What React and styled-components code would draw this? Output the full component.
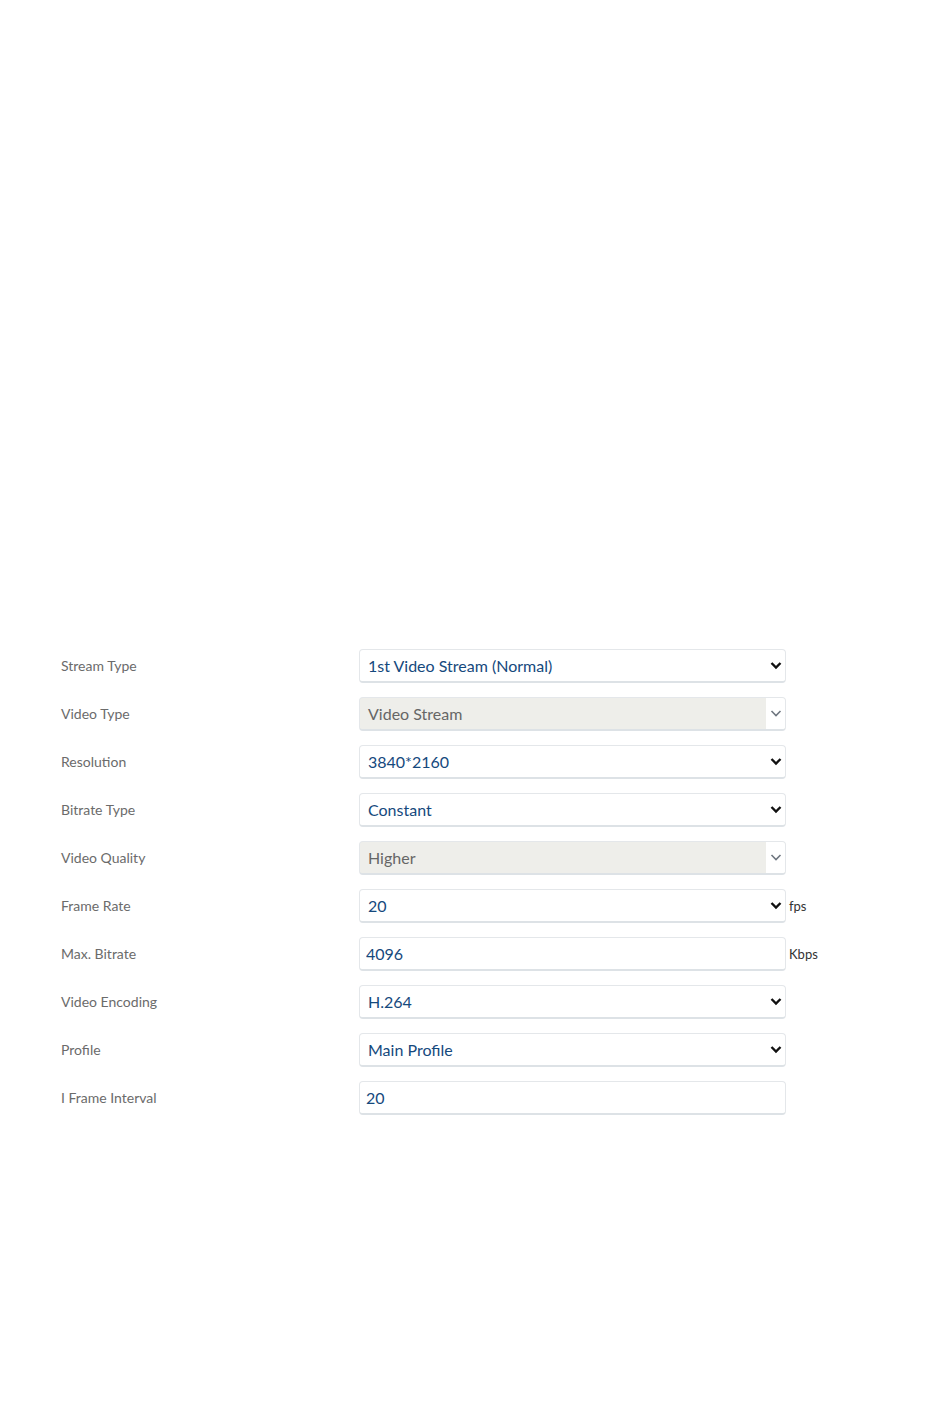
import React from "react";
import styled, { createGlobalStyle } from "styled-components";

const GlobalStyle = createGlobalStyle`
  html, body {
    margin: 0;
    padding: 0;
    background: #fff;
  }
  body {
    font-family: Lato, "Open Sans", "Liberation Sans", sans-serif;
  }
`;

const rows = [
  { label: "Stream Type", type: "select", value: "1st Video Stream (Normal)" },
  { label: "Video Type", type: "select", value: "Video Stream", disabled: true },
  { label: "Resolution", type: "select", value: "3840*2160" },
  { label: "Bitrate Type", type: "select", value: "Constant" },
  { label: "Video Quality", type: "select", value: "Higher", disabled: true },
  { label: "Frame Rate", type: "select", value: "20", unit: "fps" },
  { label: "Max. Bitrate", type: "input", value: "4096", unit: "Kbps" },
  { label: "Video Encoding", type: "select", value: "H.264" },
  { label: "Profile", type: "select", value: "Main Profile" },
  { label: "I Frame Interval", type: "input", value: "20" },
];

const Chevron = ({ disabled }) => (
  <svg width="12" height="9" viewBox="0 0 12 9">
    <path
      d="M1.5 2 L6 6.5 L10.5 2"
      fill="none"
      stroke={disabled ? "#6f7780" : "#111"}
      strokeWidth={disabled ? 1.6 : 2.4}
      strokeLinejoin="miter"
    />
  </svg>
);

const App = () => {
  return (
    <>
      <GlobalStyle />
      <Page>
        <Form>
          {rows.map((r) => (
            <Row key={r.label}>
              <Label>{r.label}</Label>
              <FieldWrap>
                {r.type === "select" ? (
                  <Select $disabled={r.disabled}>
                    <Value $disabled={r.disabled}>{r.value}</Value>
                    <Arrow $disabled={r.disabled}>
                      <Chevron disabled={r.disabled} />
                    </Arrow>
                  </Select>
                ) : (
                  <Input defaultValue={r.value} />
                )}
                {r.unit && <Unit>{r.unit}</Unit>}
              </FieldWrap>
            </Row>
          ))}
        </Form>
      </Page>
    </>
  );
};

export default App;

const Page = styled.div`
  width: 950px;
  min-height: 1409px;
  padding-top: 649px;
  box-sizing: border-box;
`;

const Form = styled.div`
  display: flex;
  flex-direction: column;
  gap: 14px;
  padding-left: 61px;
`;

const Row = styled.div`
  display: flex;
  align-items: center;
  height: 34px;
`;

const Label = styled.div`
  width: 298px;
  font-size: 14px;
  color: #6b6b6b;
  margin-top: -2px;
`;

const FieldWrap = styled.div`
  display: flex;
  align-items: center;
`;

const Select = styled.div`
  width: 427px;
  height: 34px;
  box-sizing: border-box;
  display: flex;
  align-items: center;
  border: 1px solid #e4e7ea;
  border-bottom: 2px solid #dde2e6;
  border-radius: 4px;
  background: ${(p) => (p.$disabled ? "#eeeeea" : "#fff")};
  overflow: hidden;
`;

const Value = styled.div`
  flex: 1;
  padding-left: 8px;
  font-size: 16px;
  color: ${(p) => (p.$disabled ? "#666" : "#15497d")};
`;

const Arrow = styled.div`
  width: 19px;
  height: 100%;
  display: flex;
  align-items: center;
  justify-content: center;
  background: ${(p) => (p.$disabled ? "#fff" : "transparent")};
`;

const Input = styled.input`
  width: 427px;
  height: 34px;
  box-sizing: border-box;
  border: 1px solid #e4e7ea;
  border-bottom: 2px solid #dde2e6;
  border-radius: 4px;
  padding: 0 6px;
  font-family: inherit;
  font-size: 16px;
  color: #15497d;
  outline: none;
  background: #fff;
`;

const Unit = styled.span`
  margin-left: 3px;
  font-size: 13px;
  color: #333;
`;
